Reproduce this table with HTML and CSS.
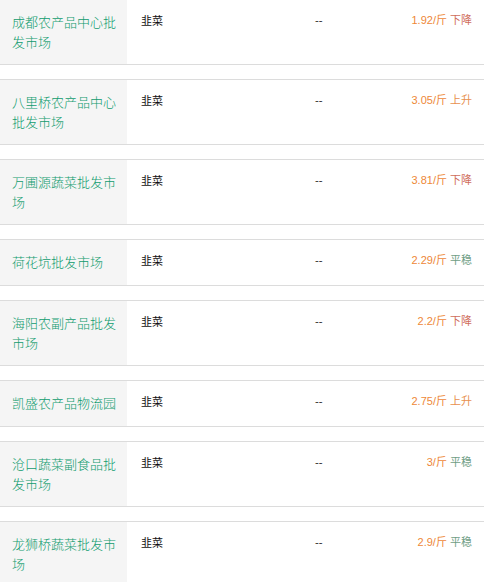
FILE: index.html
```html
<!DOCTYPE html>
<html lang="zh">
<head>
<meta charset="utf-8">
<link rel="stylesheet" href="styles.css">
</head>
<body>
<div class="list">
  <div class="row">
    <div class="market">成都农产品中心批发市场</div>
    <div class="product">韭菜</div>
    <div class="spec">--</div>
    <div class="price"><span class="num">1.92/斤</span> <span class="down">下降</span></div>
  </div>
  <div class="row">
    <div class="market">八里桥农产品中心批发市场</div>
    <div class="product">韭菜</div>
    <div class="spec">--</div>
    <div class="price"><span class="num">3.05/斤</span> <span class="up">上升</span></div>
  </div>
  <div class="row">
    <div class="market">万圃源蔬菜批发市场</div>
    <div class="product">韭菜</div>
    <div class="spec">--</div>
    <div class="price"><span class="num">3.81/斤</span> <span class="down">下降</span></div>
  </div>
  <div class="row">
    <div class="market">荷花坑批发市场</div>
    <div class="product">韭菜</div>
    <div class="spec">--</div>
    <div class="price"><span class="num">2.29/斤</span> <span class="flat">平稳</span></div>
  </div>
  <div class="row">
    <div class="market">海阳农副产品批发市场</div>
    <div class="product">韭菜</div>
    <div class="spec">--</div>
    <div class="price"><span class="num">2.2/斤</span> <span class="down">下降</span></div>
  </div>
  <div class="row">
    <div class="market">凯盛农产品物流园</div>
    <div class="product">韭菜</div>
    <div class="spec">--</div>
    <div class="price"><span class="num">2.75/斤</span> <span class="up">上升</span></div>
  </div>
  <div class="row">
    <div class="market">沧口蔬菜副食品批发市场</div>
    <div class="product">韭菜</div>
    <div class="spec">--</div>
    <div class="price"><span class="num">3/斤</span> <span class="flat">平稳</span></div>
  </div>
  <div class="row">
    <div class="market">龙狮桥蔬菜批发市场</div>
    <div class="product">韭菜</div>
    <div class="spec">--</div>
    <div class="price"><span class="num">2.9/斤</span> <span class="flat">平稳</span></div>
  </div>
</div>
</body>
</html>
```
FILE: styles.css
```css
html, body {
  margin: 0;
  padding: 0;
  background: #fff;
}
body {
  font-family: "Noto Sans CJK SC", "Noto Sans", sans-serif;
  color: #222;
}
.list {
  margin-top: -1px;
}
.row {
  display: grid;
  grid-template-columns: 127px 175px 1fr auto;
  border-top: 1px solid #dcdcdc;
  border-bottom: 1px solid #dcdcdc;
  margin-bottom: 14px;
}
.market {
  box-sizing: border-box;
  min-height: 45px;
  background: #f5f5f5;
  color: #109c6e;
  font-size: 13px;
  font-weight: 300;
  line-height: 20px;
  padding: 12px 9px 12px 12px;
}
.product, .spec, .price {
  font-size: 11px;
  line-height: 16px;
  padding-top: 12px;
}
.product {
  padding-left: 14px;
  color: #111;
}
.spec {
  padding-left: 13px;
  color: #111;
}
.price {
  font-family: "Liberation Sans", "Noto Sans CJK SC", sans-serif;
  padding-right: 12px;
  text-align: right;
  white-space: nowrap;
}
.num { color: #ee8838; }
.down { color: #cf6e5c; }
.up { color: #e8904e; }
.flat { color: #6f9e86; }
```
